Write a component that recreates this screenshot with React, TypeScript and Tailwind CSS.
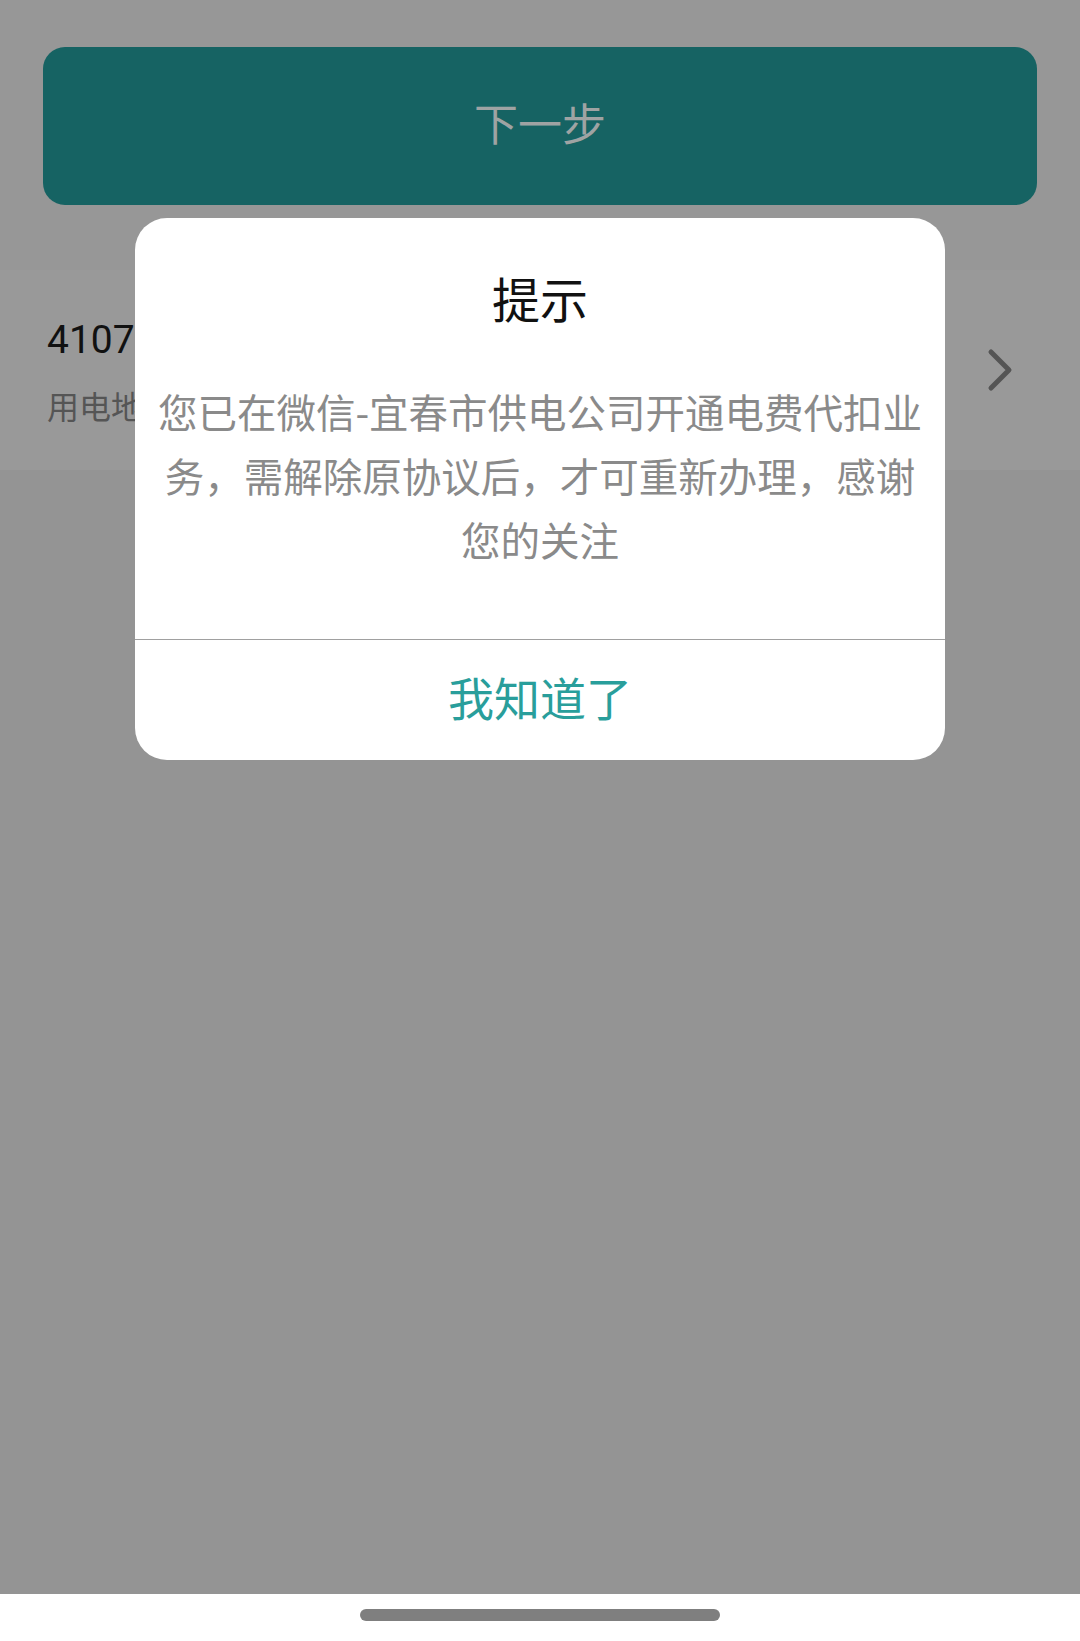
const CJK = { fontFamily: '"Noto Sans CJK SC", "Noto Sans", sans-serif' };

export default function App() {
  return (
    <div className="relative flex h-[1641px] w-full flex-col bg-[#949494]" style={CJK}>
      {/* next step button area */}
      <div className="bg-[#979797] px-[43px] pb-[65px] pt-[47px]">
        <button
          type="button"
          className="flex h-[158px] w-full items-center justify-center rounded-[22px] bg-[#166363] pb-[8px] text-[44px] text-[#9fa3a3]"
        >
          下一步
        </button>
      </div>

      {/* account row */}
      <div className="flex h-[200px] items-center justify-between bg-[#999999] pl-[47px] pr-[66px]">
        <div className="flex flex-col gap-[21px]">
          <p className="text-[39px] leading-[48px] text-[#111111]" style={{ fontFamily: 'Roboto, "Noto Sans CJK SC", sans-serif' }}>
            4107023000158294
          </p>
          <p className="text-[32px] leading-[40px] text-[#555555]">用电地址：宜春市袁州区秀江东路</p>
        </div>
        <svg width="28" height="44" viewBox="0 0 28 44" fill="none" className="text-[#555555]">
          <polyline points="5,4 23,22 5,40" stroke="currentColor" strokeWidth="5" strokeLinecap="round" strokeLinejoin="round" />
        </svg>
      </div>

      <div className="flex-1" />

      {/* system nav bar */}
      <div className="flex h-[47px] justify-center bg-white pt-[15px]">
        <div className="h-[12px] w-[360px] rounded-full bg-[#7f7f7f]" />
      </div>

      {/* dialog */}
      <div className="absolute inset-x-0 top-0 flex justify-center pt-[218px]">
        <div className="w-[810px] overflow-hidden rounded-[32px] bg-white">
          <h2 className="pt-[51px] text-center text-[48px] leading-[56px] text-[#111111]">提示</h2>
          <p className="mt-[54px] px-[16px] pb-[68px] text-center text-[39.5px] leading-[64px] text-[#8a8a8a]">
            您已在微信-宜春市供电公司开通电费代扣业务，需解除原协议后，才可重新办理，感谢您的关注
          </p>
          <div className="h-px bg-[#a0a0a0]" />
          <button
            type="button"
            className="flex h-[120px] w-full items-center justify-center pb-[8px] text-[46px] text-[#299e9b]"
          >
            我知道了
          </button>
        </div>
      </div>
    </div>
  );
}
